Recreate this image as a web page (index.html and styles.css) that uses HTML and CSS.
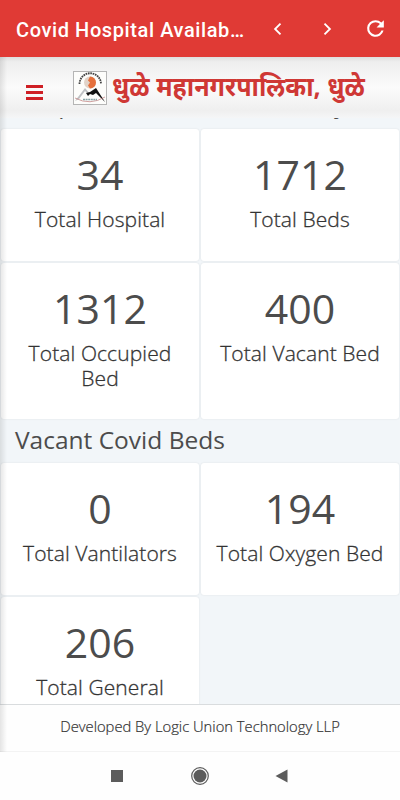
FILE: index.html
```
<!DOCTYPE html>
<html lang="en">
<head>
    <meta charset="UTF-8">
    <meta name="viewport" content="width=device-width, initial-scale=1.0">
    <title>Covid Hospital Availability</title>
    <link rel="stylesheet" href="styles.css">
</head>
<body>
    <div class="appbar">
        <div class="appbar-title">Covid Hospital Availability</div>
        <svg class="chevron" viewBox="0 0 24 24"><path d="M15 5.500L8.500 12L15 18.500"/></svg>
        <svg class="chevron" viewBox="0 0 24 24"><path d="M9 5.500L15.500 12L9 18.500"/></svg>
        <svg class="refresh" viewBox="0 0 24 24"><path d="M17.650 6.350A7.958 7.958 0 0 0 12 4a8 8 0 1 0 7.730 10h-2.080A6 6 0 1 1 12 6c1.660 0 3.140.690 4.220 1.780L13 11h7V4z"/></svg>
    </div>
    <div class="page">
        <header>
            <div class="menu"><span></span><span></span><span></span></div>
            <svg class="logo" viewBox="0 0 34 34">
                <rect x=".5" y=".5" width="33" height="33" fill="#fdfdfb" stroke="#b5b5b5"/>
                <path d="M6.500 13A10.500 10.500 0 0 1 28 13" fill="none" stroke="#444" stroke-width="1.800" stroke-dasharray="1.700 .7"/>
                <circle cx="17" cy="11.500" r="6" fill="#e2d3c8"/>
                <path d="M17 5.500a6 6 0 0 1 0 12l-2-3 2-3-2-2z" fill="#e5703c"/>
                <path d="M2 30L12 17l5 6-3-1-2-2-6 8z" fill="#bfc1c4"/>
                <path d="M13 22l4-1 6-4 9 14-9-9-3 2-3-1-2 2z" fill="#111"/>
                <path d="M2 27q15 8 30-1" fill="none" stroke="#bb7777" stroke-width=".7"/>
                <path d="M10 28.500h14" stroke="#89a5a8" stroke-width="1.500" stroke-dasharray="2 .6"/>
            </svg>
            <h1 lang="mr">धुळे महानगरपालिका, धुळे</h1>
        </header>
        <main>
            <h2 class="first">Hospital Covid Bed Availability</h2>
            <div class="cards">
                <div class="card"><b>34</b><p>Total Hospital</p></div>
                <div class="card"><b>1712</b><p>Total Beds</p></div>
                <div class="card tall"><b>1312</b><p>Total Occupied Bed</p></div>
                <div class="card tall"><b>400</b><p>Total Vacant Bed</p></div>
            </div>
            <h2>Vacant Covid Beds</h2>
            <div class="cards">
                <div class="card"><b>0</b><p>Total Vantilators</p></div>
                <div class="card"><b>194</b><p>Total Oxygen Bed</p></div>
                <div class="card tall"><b>206</b><p>Total General<br>Bed</p></div>
            </div>
        </main>
        <footer>Developed By Logic Union Technology LLP</footer>
    </div>
    <div class="navbar">
        <svg viewBox="0 0 20 20"><rect x="4" y="4" width="12" height="12"/></svg>
        <svg viewBox="0 0 20 20"><circle cx="10" cy="10" r="8.300" class="ring"/><circle cx="10" cy="10" r="6.500"/></svg>
        <svg viewBox="0 0 20 20"><path d="M2.500 10L14.500 3.500v13z"/></svg>
    </div>
</body>
</html>
```
FILE: styles.css
```
* {
    box-sizing: border-box;
}
body {
    margin: 0;
    height: 800px;
    display: flex;
    flex-direction: column;
    overflow: hidden;
    font-family: "Open Sans", sans-serif;
    background: #fefefe;
    color: #4c4c4c;
}
.appbar {
    height: 57px;
    flex: none;
    display: flex;
    align-items: center;
    padding: 2px 12px 0 16px;
    background: #e03a35;
    color: #fff;
}
.appbar-title {
    width: 229px;
    margin-right: 21px;
    font: 500 20px Roboto, sans-serif;
    letter-spacing: 0.6px;
    white-space: nowrap;
    overflow: hidden;
    text-overflow: ellipsis;
}
.appbar svg {
    flex: none;
    position: relative;
    top: -1px;
}
.chevron {
    width: 24px;
    height: 20px;
    margin-right: 25px;
    fill: none;
    stroke: #fff;
    stroke-width: 2.2;
}
.refresh {
    width: 25px;
    height: 25px;
    margin-left: -1px;
    fill: #fff;
}
.page {
    position: relative;
    height: 695px;
    flex: none;
    display: flex;
    flex-direction: column;
}
/* soft shadow down the left edge */
.page::after {
    content: "";
    position: absolute;
    left: 0;
    top: 0;
    width: 7px;
    height: 100%;
    background: linear-gradient(to right, rgba(0,0,0,0.1), rgba(0,0,0,0));
}
header {
    height: 61px;
    flex: none;
    display: flex;
    padding-left: 26px;
    background: linear-gradient(#dedede, #eee 8%, #fbfbfb 50%, #efefef 88%, #f5f6f7);
}
.menu {
    width: 17px;
    margin: 28px 30px 0 0;
    display: flex;
    flex-direction: column;
    gap: 3px;
}
.menu span {
    height: 3px;
    background: #cf1f25;
}
.logo {
    width: 34px;
    height: 34px;
    margin: 14px 5px 0 0;
    flex: none;
}
h1 {
    margin: 10px 0 0;
    font: bold 27px/38px "Noto Sans", "Noto Sans Devanagari", sans-serif;
    color: #cf3835;
    white-space: nowrap;
    transform: scaleX(0.93);
    transform-origin: left;
}
main {
    height: 586px;
    flex: none;
    overflow: hidden;
    background: #f2f6f9;
}
h2 {
    margin: 0;
    height: 44px;
    padding-left: 15px;
    font-size: 24.5px;
    line-height: 41px;
    font-weight: 400;
}
.first {
    margin-top: -34px;
    height: 45px;
    line-height: 39px;
    letter-spacing: -0.4px;
}
.cards {
    display: grid;
    grid-template-columns: 1fr 1fr;
    gap: 2px;
    padding: 0 1px;
}
.card {
    height: 132px;
    padding: 17px 15px 0;
    background: #fff;
    border-radius: 3px;
    box-shadow: 0 0 2px rgba(0,0,0,0.1);
    text-align: center;
}
.card.tall {
    height: 156px;
}
.card b {
    display: block;
    font-size: 41px;
    line-height: 56px;
    font-weight: 400;
}
.card p {
    margin: 5px 0 0;
    font-size: 21px;
    line-height: 24.5px;
    font-weight: 300;
    letter-spacing: 0.1px;
    color: #333;
    -webkit-text-stroke: 0.3px #333;
}
footer {
    height: 48px;
    flex: none;
    border-top: 1px solid #d9dcde;
    border-bottom: 1px solid #f3f3f3;
    background: #fefefe;
    color: #333;
    font-size: 14.75px;
    font-weight: 300;
    -webkit-text-stroke: 0.2px #333;
    line-height: 42px;
    text-align: center;
}
.navbar {
    flex: 1;
    display: flex;
    justify-content: center;
    align-items: center;
    gap: 63px;
}
.navbar svg {
    width: 20px;
    height: 20px;
    fill: #5c5c5c;
}
.navbar .ring {
    fill: none;
    stroke: #5c5c5c;
    stroke-width: 1.2;
}
```
